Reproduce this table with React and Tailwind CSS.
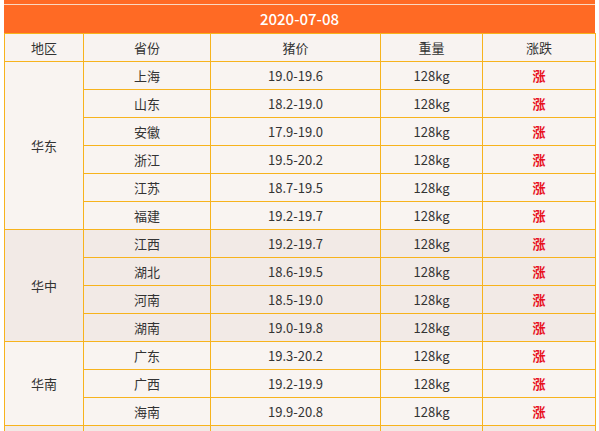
import React from 'react';

const groups = [
  {
    region: '华东',
    bg: 'bg-[#f9f4f1]',
    rows: [
      ['上海', '19.0-19.6'],
      ['山东', '18.2-19.0'],
      ['安徽', '17.9-19.0'],
      ['浙江', '19.5-20.2'],
      ['江苏', '18.7-19.5'],
      ['福建', '19.2-19.7'],
    ],
  },
  {
    region: '华中',
    bg: 'bg-[#f2eae6]',
    rows: [
      ['江西', '19.2-19.7'],
      ['湖北', '18.6-19.5'],
      ['河南', '18.5-19.0'],
      ['湖南', '19.0-19.8'],
    ],
  },
  {
    region: '华南',
    bg: 'bg-[#f9f4f1]',
    rows: [
      ['广东', '19.3-20.2'],
      ['广西', '19.2-19.9'],
      ['海南', '19.9-20.8'],
    ],
  },
];

const cell = 'border border-[#f7b31d] h-[28px] p-0 text-center align-middle';

export default function App() {
  return (
    <div
      className="w-[599px] h-[431px] overflow-hidden bg-white text-[13px] text-[#333]"
      style={{ fontFamily: '"Microsoft YaHei", "Noto Sans CJK SC", "Noto Sans", sans-serif' }}
    >
      <div className="ml-[4px] w-[591px]">
        <div className="h-[4px] bg-[#ff6a24]" />
        <div className="h-[1px] bg-[#fbd8c0]" />
        <div className="h-[28px] bg-[#ff6a24] flex items-center justify-center text-white text-[15px] font-medium">
          2020-07-08
        </div>
        <table className="w-full border-collapse table-fixed">
          <colgroup>
            <col className="w-[79px]" />
            <col className="w-[127px]" />
            <col className="w-[170px]" />
            <col className="w-[102px]" />
            <col className="w-[113px]" />
          </colgroup>
          <thead>
            <tr className="bg-[#f8f3f1]">
              <th className={`${cell} font-normal`}>地区</th>
              <th className={`${cell} font-normal`}>省份</th>
              <th className={`${cell} font-normal`}>猪价</th>
              <th className={`${cell} font-normal`}>重量</th>
              <th className={`${cell} font-normal`}>涨跌</th>
            </tr>
          </thead>
          <tbody>
            {groups.map((g) =>
              g.rows.map(([prov, price], i) => (
                <tr key={prov} className={g.bg}>
                  {i === 0 && (
                    <td className={cell} rowSpan={g.rows.length}>
                      {g.region}
                    </td>
                  )}
                  <td className={cell}>{prov}</td>
                  <td className={cell}>{price}</td>
                  <td className={cell}>128kg</td>
                  <td className={`${cell} text-[#e8101c] font-bold`}>涨</td>
                </tr>
              ))
            )}
            {/* next group starts below the fold */}
            <tr className="bg-[#f2eae6]">
              <td className={cell} />
              <td className={cell} />
              <td className={cell} />
              <td className={cell} />
              <td className={cell} />
            </tr>
          </tbody>
        </table>
      </div>
    </div>
  );
}
